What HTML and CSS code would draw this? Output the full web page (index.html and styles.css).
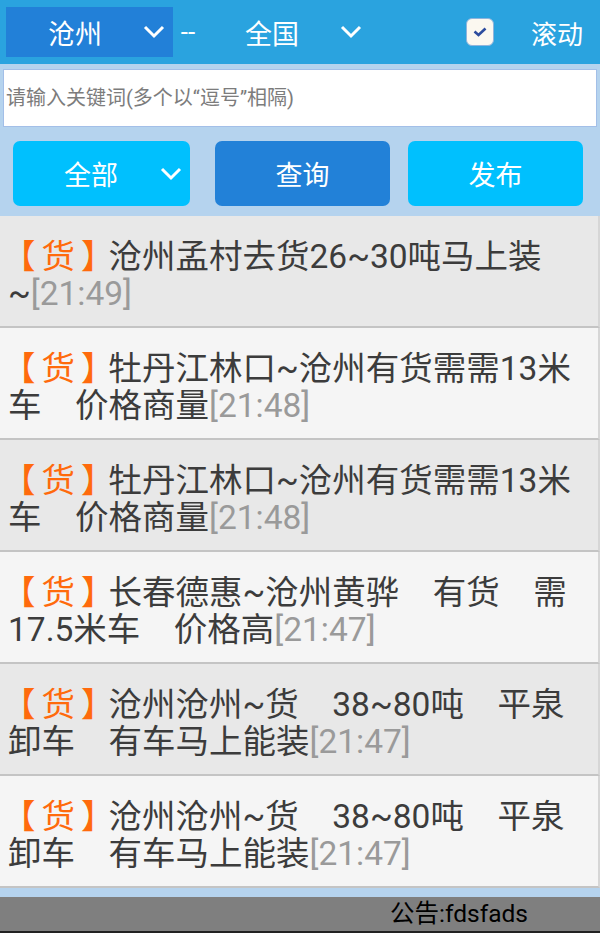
FILE: index.html
```html
<!DOCTYPE html>
<html lang="zh-CN">

<head>
    <meta charset="UTF-8">
    <meta name="viewport" content="width=device-width, initial-scale=1.0">
    <title>货源信息</title>
    <link rel="stylesheet" href="styles.css">
</head>

<body>

    <div class="app">
        <!-- Top bar -->
        <div class="topbar">
            <div class="select active">
                <span>沧州</span>
                <svg class="chevron" width="22" height="14" viewBox="0 0 22 14"><path d="M2 2 L11 11 L20 2" /></svg>
            </div>
            <span class="dash">--</span>
            <div class="select">
                <span>全国</span>
                <svg class="chevron" width="22" height="14" viewBox="0 0 22 14"><path d="M2 2 L11 11 L20 2" /></svg>
            </div>
            <label class="scroll">
                <span class="check">
                    <svg width="14" height="10" viewBox="0 0 14 10"><path d="M1.5 4.5 L5.5 8 L12.5 1.5" /></svg>
                </span>
                <span>滚动</span>
            </label>
        </div>

        <!-- Search -->
        <div class="search">
            <input type="text" class="keyword" placeholder="请输入关键词(多个以“逗号”相隔)">
            <div class="buttons">
                <div class="btn light type">
                    <span>全部</span>
                    <svg class="chevron" width="22" height="14" viewBox="0 0 22 14"><path d="M2 2 L11 11 L20 2" /></svg>
                </div>
                <div class="btn dark query">查询</div>
                <div class="btn light publish">发布</div>
            </div>
        </div>

        <!-- List -->
        <div class="list">
            <div class="item odd"><span class="tag"><span class="lb">【</span>货<span class="rb">】</span></span>沧州孟村去货26~30吨马上装<br>~<span class="time">[21:49]</span></div>
            <div class="item"><span class="tag"><span class="lb">【</span>货<span class="rb">】</span></span>牡丹江林口~沧州有货需需13米<br>车　价格商量<span class="time">[21:48]</span></div>
            <div class="item odd"><span class="tag"><span class="lb">【</span>货<span class="rb">】</span></span>牡丹江林口~沧州有货需需13米<br>车　价格商量<span class="time">[21:48]</span></div>
            <div class="item"><span class="tag"><span class="lb">【</span>货<span class="rb">】</span></span>长春德惠~沧州黄骅　有货　需<br>17.5米车　价格高<span class="time">[21:47]</span></div>
            <div class="item odd"><span class="tag"><span class="lb">【</span>货<span class="rb">】</span></span>沧州沧州~货　38~80吨　平泉<br>卸车　有车马上能装<span class="time">[21:47]</span></div>
            <div class="item"><span class="tag"><span class="lb">【</span>货<span class="rb">】</span></span>沧州沧州~货　38~80吨　平泉<br>卸车　有车马上能装<span class="time">[21:47]</span></div>
        </div>

        <!-- Notice -->
        <div class="notice">公告:fdsfads</div>
    </div>

</body>

</html>
```

FILE: styles.css
```css
body {
    margin: 0;
    font-family: Roboto, "Noto Sans CJK SC", sans-serif;
}

.app {
    width: 600px;
    height: 933px;
    display: flex;
    flex-direction: column;
    overflow: hidden;
}

.topbar {
    height: 64px;
    display: flex;
    align-items: center;
    padding-left: 6px;
    background-color: #2aa3df;
    color: white;
    font-size: 26px;
}

.select {
    width: 167px;
    height: 50px;
    box-sizing: border-box;
    display: flex;
    align-items: center;
    justify-content: space-between;
    padding: 0 8px 0 42px;
    font-size: 27px;
}

.select.active {
    background-color: #2280d8;
}

.chevron path {
    fill: none;
    stroke: white;
    stroke-width: 3;
}

.dash {
    width: 30px;
    text-align: center;
}

.scroll {
    margin-left: auto;
    padding-right: 17px;
    display: flex;
    align-items: center;
    gap: 37px;
}

.check {
    width: 28px;
    height: 28px;
    box-sizing: border-box;
    border: 1px solid #8fb4dc;
    border-radius: 6px;
    background-color: #fbf8f0;
    display: flex;
    align-items: center;
    justify-content: center;
}

.check path {
    fill: none;
    stroke: #2c4c9e;
    stroke-width: 2.6;
}

.search {
    background-color: #b5d3ee;
    padding: 5px 3px 10px;
}

.keyword {
    display: block;
    width: 100%;
    height: 58px;
    box-sizing: border-box;
    border: 1px solid #a3bfe8;
    padding: 0 2px;
    font-family: Roboto, "Noto Sans CJK SC", sans-serif;
    font-size: 20px;
    outline: none;
}

.keyword::placeholder {
    color: #7c7c7c;
}

.buttons {
    display: flex;
    margin-top: 14px;
    padding-left: 10px;
}

.btn {
    width: 175px;
    height: 65px;
    border-radius: 7px;
    color: white;
    font-size: 27px;
    display: flex;
    align-items: center;
    justify-content: center;
}

.btn.light {
    background-color: #00c0fe;
}

.btn.dark {
    background-color: #2281d8;
}

.type {
    width: 177px;
    box-sizing: border-box;
    justify-content: space-between;
    padding: 0 8px 0 51px;
}

.query {
    margin-left: 25px;
}

.publish {
    margin-left: 18px;
}

.list {
    flex: 1;
    background-color: #b5d3ee;
}

.item {
    height: 112px;
    box-sizing: border-box;
    padding: 22px 6px 0 8px;
    background-color: #f5f5f5;
    border-right: 2px solid #d6d6d6;
    border-bottom: 2px solid #c4c4c4;
    color: #3c3c3c;
    font-size: 33.5px;
    line-height: 37px;
    white-space: nowrap;
}

.item.odd {
    background-color: #e8e8e8;
}

.tag {
    color: #ff6a0c;
}

/* Android draws the brackets centred in their cell */
.lb {
    margin-left: -6px;
    margin-right: 6px;
}

.rb {
    margin-left: 6px;
    letter-spacing: -6px;
}

.time {
    color: #9a9a9a;
}

.notice {
    height: 36px;
    background-color: #7f7f7f;
    border-bottom: 2px solid #222;
    box-sizing: border-box;
    padding-left: 390px;
    font-size: 24.5px;
    line-height: 34px;
    color: black;
}
```
